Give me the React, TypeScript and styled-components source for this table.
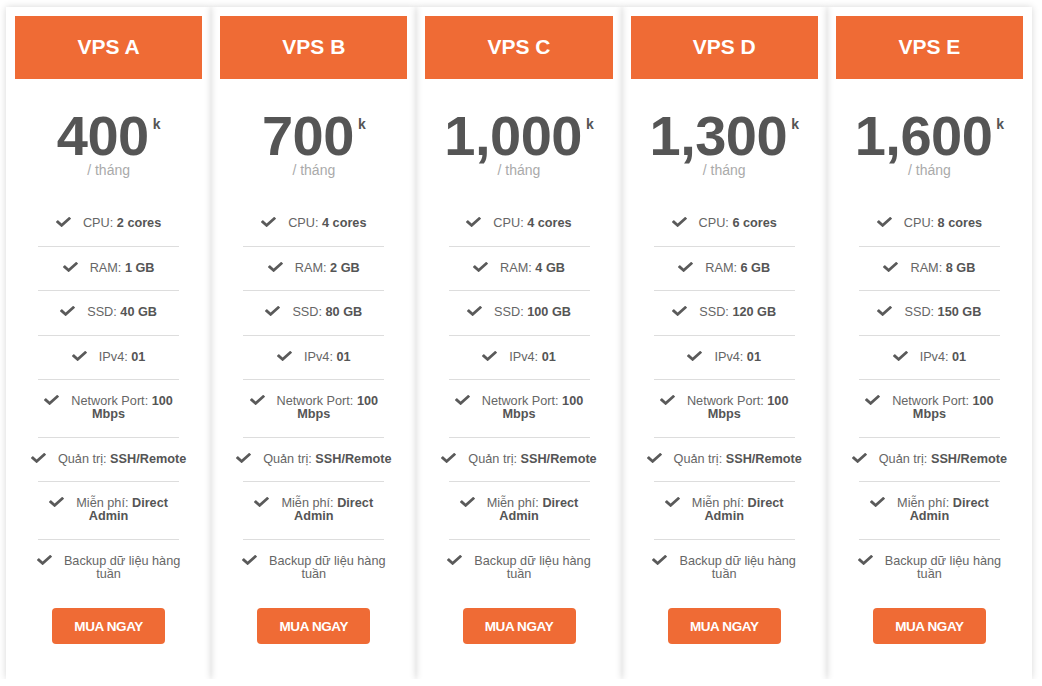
import React from 'react';
import styled, { createGlobalStyle } from 'styled-components';

const GlobalStyle = createGlobalStyle`
  html, body {
    margin: 0;
    padding: 0;
    background: #ffffff;
  }
  body {
    font-family: "Liberation Sans", Arial, Helvetica, sans-serif;
  }
`

type Plan = {
  name: string;
  price: string;
  cpu: string;
  ram: string;
  ssd: string;
}

const plans: Plan[] = [
  { name: 'VPS A', price: '400', cpu: '2 cores', ram: '1 GB', ssd: '40 GB' },
  { name: 'VPS B', price: '700', cpu: '4 cores', ram: '2 GB', ssd: '80 GB' },
  { name: 'VPS C', price: '1,000', cpu: '4 cores', ram: '4 GB', ssd: '100 GB' },
  { name: 'VPS D', price: '1,300', cpu: '6 cores', ram: '6 GB', ssd: '120 GB' },
  { name: 'VPS E', price: '1,600', cpu: '8 cores', ram: '8 GB', ssd: '150 GB' },
]

const Check = () => (
  <CheckIcon viewBox="0 64 512 384" preserveAspectRatio="none">
    <path d="M173.898 439.404l-166.4-166.4c-9.997-9.997-9.997-26.206 0-36.204l36.203-36.204c9.997-9.998 26.207-9.998 36.204 0L192 312.69 432.095 72.596c9.997-9.997 26.207-9.997 36.204 0l36.203 36.204c9.997 9.997 9.997 26.206 0 36.204l-294.4 294.401c-9.998 9.997-26.207 9.997-36.204-.001z" />
  </CheckIcon>
)

function App() {
  return (
    <>
      <GlobalStyle />
      <Table>
        {plans.map((p) => {
          const features: [string, string][] = [
            ['CPU: ', p.cpu],
            ['RAM: ', p.ram],
            ['SSD: ', p.ssd],
            ['IPv4: ', '01'],
            ['Network Port: ', '100 Mbps'],
            ['Quản trị: ', 'SSH/Remote'],
            ['Miễn phí: ', 'Direct Admin'],
            ['Backup dữ liệu hàng tuần', ''],
          ]
          return (
            <Card key={p.name}>
              <Title>{p.name}</Title>
              <Price>
                {p.price}
                <Unit>k</Unit>
              </Price>
              <Period>/ tháng</Period>
              <Features>
                {features.map(([label, value], i) => (
                  <React.Fragment key={label}>
                    {i > 0 && <Divider />}
                    <Feature>
                      <Check />
                      {label}
                      {value && <strong>{value}</strong>}
                    </Feature>
                  </React.Fragment>
                ))}
              </Features>
              <BuyButton>MUA NGAY</BuyButton>
            </Card>
          )
        })}
      </Table>
    </>
  );
}

export default App;

const orange = '#ef6b35'

const Table = styled.div`
    display: flex;
    width: 1026px;
    padding: 7px 0 0 6px;
`
const Card = styled.div`
    position: relative;
    flex: 1;
    background: #fff;
    padding: 9px 9px 35px;
    display: flex;
    flex-direction: column;
    align-items: center;

    &::after{
        content: '';
        position: absolute;
        inset: 0;
        z-index: 1;
        pointer-events: none;
        box-shadow: 0 0 7px rgba(0, 0, 0, 0.16);
    }
`
const Title = styled.div`
    align-self: stretch;
    height: 63px;
    padding-bottom: 2px;
    box-sizing: border-box;
    background: ${orange};
    color: #fff;
    font-size: 21px;
    font-weight: 700;
    display: flex;
    align-items: center;
    justify-content: center;
`
const Price = styled.div`
    margin-top: 29px;
    font-size: 56px;
    line-height: 56px;
    font-weight: 700;
    color: #555;
    letter-spacing: -0.5px;
`
const Unit = styled.span`
    display: inline-block;
    vertical-align: top;
    margin: 9px 0 0 4px;
    font-size: 14px;
    line-height: 14px;
    letter-spacing: 0;
`
const Period = styled.div`
    margin-top: -2px;
    font-size: 14px;
    line-height: 16px;
    color: #aaa;
`
const Features = styled.ul`
    list-style: none;
    margin: 24px 0 0;
    padding: 0;
    width: 159px;
`
const Feature = styled.li`
    padding: 15px 0 15.5px;
    text-align: center;
    font-size: 12.7px;
    line-height: 13px;
    color: #666;

    strong{
        color: #555;
        font-weight: 700;
    }
`
const CheckIcon = styled.svg`
    width: 15px;
    height: 10px;
    margin-right: 12px;
    fill: #5a5a5a;
    vertical-align: baseline;
`
const Divider = styled.li`
    width: 141px;
    height: 1px;
    margin: 0 auto;
    background: #ddd;
`
const BuyButton = styled.button`
    margin-top: 12px;
    width: 113px;
    height: 36px;
    border: none;
    border-radius: 4px;
    background: ${orange};
    color: #fff;
    font-family: "Liberation Sans", Arial, sans-serif;
    font-size: 13.5px;
    font-weight: 700;
    letter-spacing: -0.4px;
    cursor: pointer;
`
